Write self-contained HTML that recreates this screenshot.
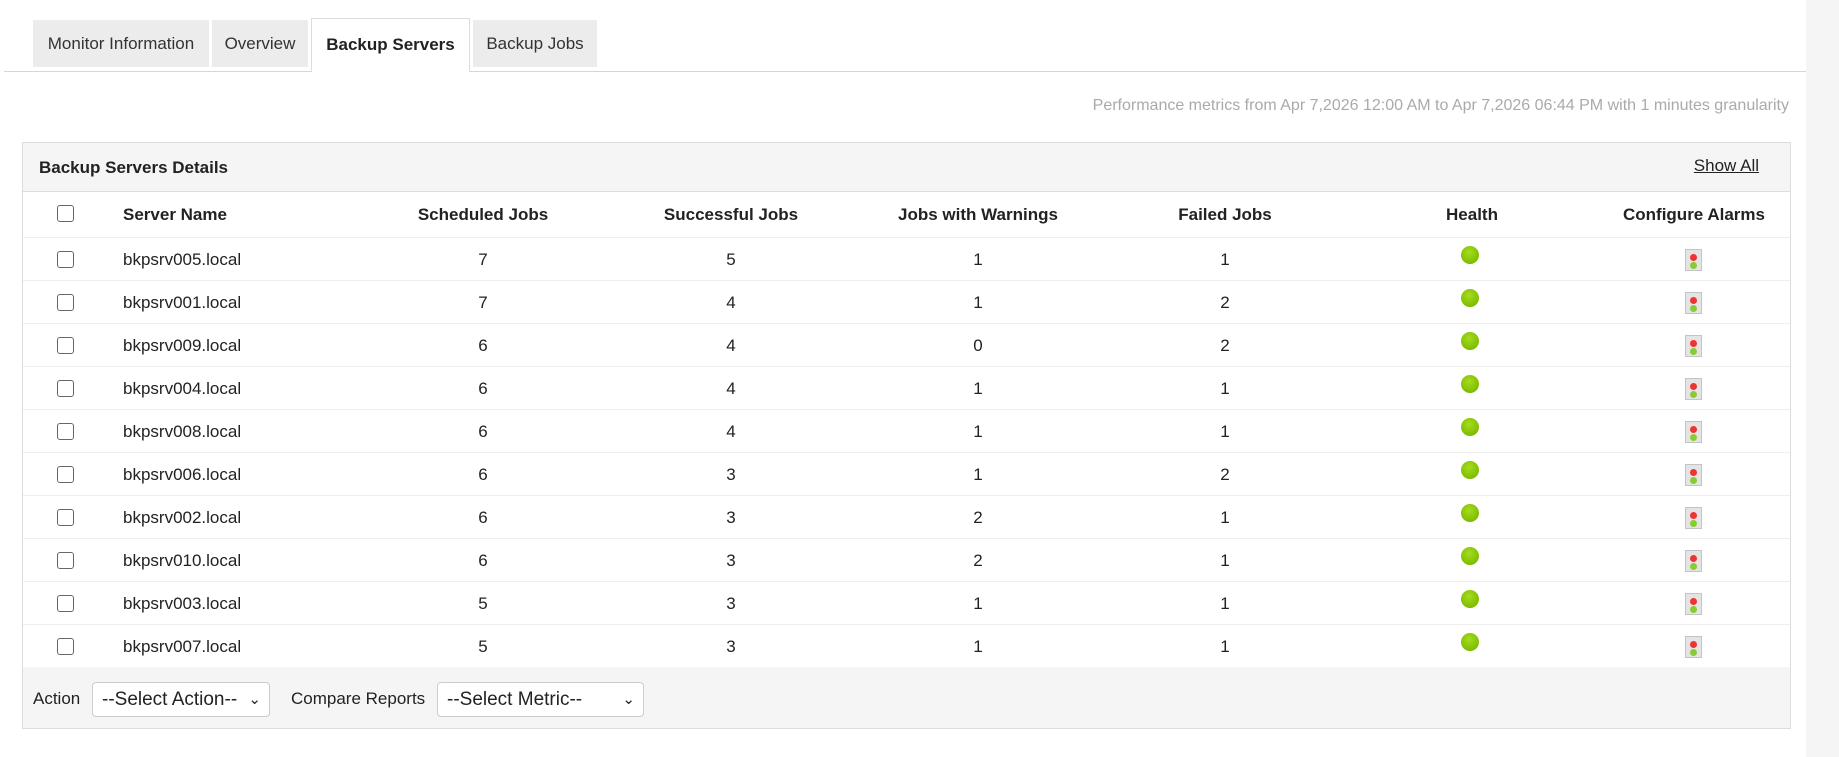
<!DOCTYPE html>
<html><head><meta charset="utf-8"><style>
*{box-sizing:border-box;margin:0;padding:0}
body{width:1839px;height:757px;background:#fff;font-family:"Liberation Sans",Arial,sans-serif;color:#222;position:relative;overflow:hidden}
.strip{position:absolute;left:1806px;top:0;width:33px;height:757px;background:#f5f5f5}
.tab{position:absolute;top:20px;height:47px;background:#ececec;font-size:17px;line-height:47px;text-align:center;color:#333;white-space:nowrap}
.tab.act{top:18px;height:54px;background:#fff;border:1px solid #ddd;border-bottom:none;font-weight:bold;color:#222;line-height:52px}
.tline{position:absolute;left:4px;top:71px;width:1802px;height:1px;background:#d6d6d6}
.perf{position:absolute;right:50px;top:97px;font-size:16px;color:#aaa;white-space:nowrap}
.panel{position:absolute;left:22px;top:142px;width:1769px;height:587px;border:1px solid #ddd}
.ph{height:49px;background:#f5f5f5;border-bottom:1px solid #ddd;position:relative}
.ph b{position:absolute;left:16px;top:15px;font-size:17px}
.ph a{position:absolute;right:31px;top:13px;font-size:17px;color:#222;text-decoration:underline}
.row{height:43px;border-bottom:1px solid #eee;position:relative;font-size:17px;white-space:nowrap}
.row.h{height:46px;font-weight:bold}
.row span{position:absolute;top:12px}
.row.h span{top:13px}
.c{transform:translateX(-50%)}
.cb{position:absolute;left:34px;top:13px;width:17px;height:17px;border:1.5px solid #666;border-radius:3px;background:#fff}
.dot{position:absolute;left:1438px;top:8px;width:18px;height:18px;border-radius:50%;background:radial-gradient(circle at 45% 35%,#a6dc1e,#7fbd00 70%,#6aa500)}
.al{position:absolute;left:1662px;top:11px;width:17px;height:22px;background:#e4e4e4;border:1px solid #c4c4c4}
.al:before{content:"";position:absolute;left:4px;top:4px;width:7px;height:7px;border-radius:50%;background:#e33}
.al:after{content:"";position:absolute;left:4px;top:12px;width:7px;height:7px;border-radius:50%;background:#8c3}
.foot{position:absolute;left:0;bottom:0;width:100%;height:61px;background:#f5f5f5;font-size:17px}
.foot span{position:absolute;top:22px}
.sel{position:absolute;top:15px;height:35px;border:1px solid #ccc;border-radius:4px;background:#fff;font-size:19px;line-height:33px;padding-left:9px;white-space:nowrap}
.sel i{position:absolute;right:8px;top:0;font-style:normal;font-size:15px}
</style></head><body>
<div class="strip"></div>
<div class="tab" style="left:33px;width:176px">Monitor Information</div>
<div class="tab" style="left:212px;width:96px">Overview</div>
<div class="tline"></div>
<div class="tab act" style="left:311px;width:159px">Backup Servers</div>
<div class="tab" style="left:473px;width:124px">Backup Jobs</div>
<div class="perf">Performance metrics from Apr 7,2026 12:00 AM to Apr 7,2026 06:44 PM with 1 minutes granularity</div>
<div class="panel">
<div class="ph"><b>Backup Servers Details</b><a>Show All</a></div>
<div class="row h"><div class="cb"></div><span style="left:100px">Server Name</span><span class="c" style="left:460px">Scheduled Jobs</span><span class="c" style="left:708px">Successful Jobs</span><span class="c" style="left:955px">Jobs with Warnings</span><span class="c" style="left:1202px">Failed Jobs</span><span class="c" style="left:1449px">Health</span><span class="c" style="left:1671px">Configure Alarms</span></div>
<div id="rows"></div>
<div class="foot"><span style="left:10px">Action</span><div class="sel" style="left:69px;width:178px">--Select Action--<i>&#8964;</i></div><span style="left:268px">Compare Reports</span><div class="sel" style="left:414px;width:207px">--Select Metric--<i>&#8964;</i></div></div>
</div>
<script>
var d=[["bkpsrv005.local",7,5,1,1],["bkpsrv001.local",7,4,1,2],["bkpsrv009.local",6,4,0,2],["bkpsrv004.local",6,4,1,1],["bkpsrv008.local",6,4,1,1],["bkpsrv006.local",6,3,1,2],["bkpsrv002.local",6,3,2,1],["bkpsrv010.local",6,3,2,1],["bkpsrv003.local",5,3,1,1],["bkpsrv007.local",5,3,1,1]];
var h="";d.forEach(function(r){h+='<div class="row"><div class="cb"></div><span style="left:100px">'+r[0]+'</span><span class="c" style="left:460px">'+r[1]+'</span><span class="c" style="left:708px">'+r[2]+'</span><span class="c" style="left:955px">'+r[3]+'</span><span class="c" style="left:1202px">'+r[4]+'</span><div class="dot"></div><div class="al"></div></div>';});
document.getElementById("rows").innerHTML=h;
</script>
</body></html>
